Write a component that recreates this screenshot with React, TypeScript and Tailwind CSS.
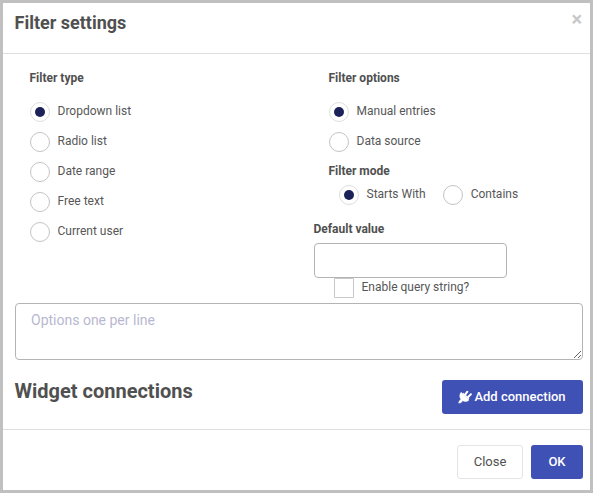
import type { ReactNode } from "react";

function Choice({ label, checked = false, square = false }: { label: string; checked?: boolean; square?: boolean }) {
  return (
    <label className="flex h-5 items-start gap-[7.5px]">
      <span
        className={
          "flex h-5 w-5 shrink-0 items-center justify-center border bg-white " +
          (square ? "rounded-[1px] border-[#c8c8c8] " : "rounded-full ") +
          (checked ? "border-[#dedede]" : "border-[#c4c4c4]")
        }
      >
        {checked && <span className="mr-px h-2.5 w-2.5 rounded-full bg-[#1b2259]" />}
      </span>
      <span className="whitespace-nowrap text-[12px] leading-[18px] text-[#575757]">{label}</span>
    </label>
  );
}

function Heading({ children }: { children: ReactNode }) {
  return <h3 className="-ml-[0.5px] text-[12px] leading-4 font-bold">{children}</h3>;
}

function PlugIcon() {
  return (
    <svg viewBox="0 0 14 14" className="h-[14px] w-[14px]" fill="currentColor" stroke="currentColor">
      <path d="M7 4.8 9.3 1.7M9.6 7.4 12.9 4.3" strokeWidth="2" strokeLinecap="round" fill="none" />
      <path d="M3.1 2.3 11 9.9C9.4 11.6 6.7 12 4.7 10.7L2.9 12.8.6 13.1 1.2 11.2 2.9 9.2C1.3 7.2 1.4 4.2 3.1 2.3Z" strokeWidth="0.5" strokeLinejoin="round" />
      <path d="M5 3.2 11 8.8" strokeWidth="1.2" fill="none" />
    </svg>
  );
}

export default function App() {
  return (
    <div className="flex h-[493px] w-[593px] flex-col border-[3px] border-[#c0c0c0] bg-white font-['Roboto',sans-serif] text-[#505050]">
      <header className="flex h-[51px] shrink-0 justify-between border-b border-[#e0e0e0] pr-2 pl-[11.5px]">
        <h1 className="pt-2 text-[18px] leading-6 font-bold">Filter settings</h1>
        <button className="h-5 pt-[5px] text-[20px] leading-[22px] font-bold text-[#c8c8c8]">×</button>
      </header>

      <main className="flex h-[375px] shrink-0 flex-col pr-[7px] pl-3">
        <div className="flex h-[246px] pt-4">
          <section className="w-[299px] pl-[15px]">
            <Heading>Filter type</Heading>
            <div className="mt-4 flex flex-col gap-2.5">
              <Choice label="Dropdown list" checked />
              <Choice label="Radio list" />
              <Choice label="Date range" />
              <Choice label="Free text" />
              <Choice label="Current user" />
            </div>
          </section>
          <section>
            <div className="pl-[15px]">
              <Heading>Filter options</Heading>
              <div className="mt-4 flex flex-col gap-2.5">
                <Choice label="Manual entries" checked />
                <Choice label="Data source" />
              </div>
              <div className="mt-[11px]">
                <Heading>Filter mode</Heading>
              </div>
              <div className="mt-[6px] flex gap-[17.5px] pl-2.5">
                <Choice label="Starts With" checked />
                <Choice label="Contains" />
              </div>
            </div>
            <div className="mt-4">
              <Heading>Default value</Heading>
            </div>
            <input className="mt-[6px] block h-[35px] w-[193px] rounded-[4px] border border-[#b4b4b4] outline-none" />
            <div className="pl-5">
              <Choice label="Enable query string?" square />
            </div>
          </section>
        </div>
        <textarea
          placeholder="Options one per line"
          className="mt-[3px] block h-[57px] w-[568px] shrink-0 rounded-[4px] border border-[#b4b4b4] px-[15px] py-[7px] text-[14px] leading-[18px] outline-none placeholder:text-[#b8b8d0]"
        />
        <div className="mt-5 flex items-start justify-between">
          <h2 className="-mt-px -ml-[0.5px] text-[20px] leading-[24px] font-bold">Widget connections</h2>
          <button className="flex h-[34px] w-[141px] items-center justify-center gap-[2px] rounded-[3px] bg-[#3f51b5] pr-px text-[13px] font-medium text-white">
            <PlugIcon />
            Add connection
          </button>
        </div>
      </main>

      <footer className="flex h-[61px] shrink-0 justify-end gap-2 border-t border-[#e0e0e0] pt-[15px] pr-[7px]">
        <button className="h-[34px] w-[66px] rounded-[3px] border border-[#e4e4e4] text-[13px]">Close</button>
        <button className="h-[34px] w-[52px] rounded-[3px] bg-[#3f51b5] text-[13px] font-medium text-white">OK</button>
      </footer>
    </div>
  );
}
